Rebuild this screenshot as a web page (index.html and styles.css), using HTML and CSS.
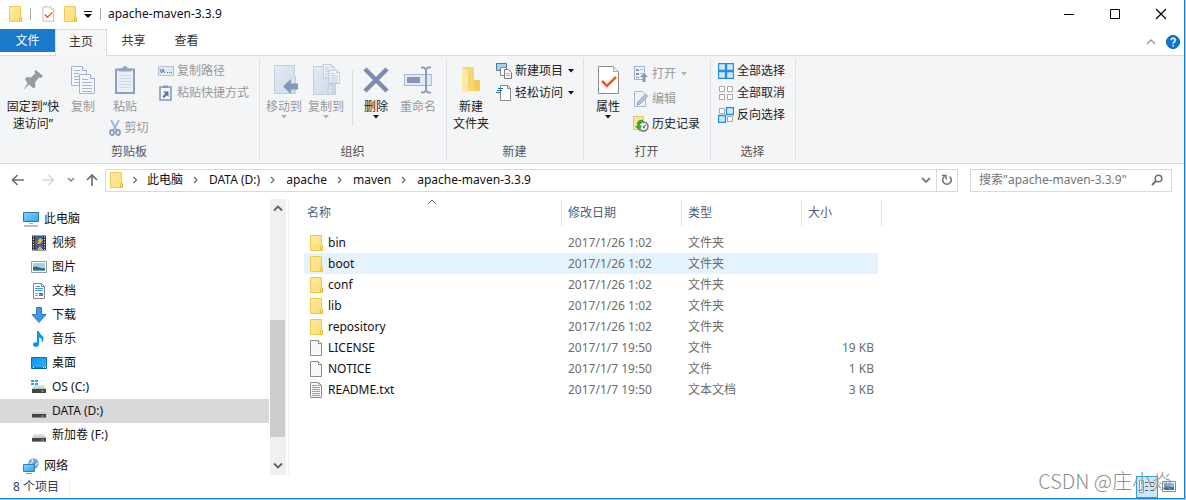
FILE: index.html
```html
<!DOCTYPE html>
<html lang="zh-CN">
<head>
<meta charset="utf-8">
<title>apache-maven-3.3.9</title>
<link rel="stylesheet" href="styles.css">
</head>
<body>
<svg class="defs" aria-hidden="true">
  <defs>
    <linearGradient id="gfold" x1="0" y1="0" x2="1" y2="1"><stop offset="0" stop-color="#ffeaa3"/><stop offset="1" stop-color="#fddc73"/></linearGradient>
    <linearGradient id="gscreen" x1="0" y1="0" x2="1" y2="1"><stop offset="0" stop-color="#8bd3ff"/><stop offset="1" stop-color="#2ea3f5"/></linearGradient>
    <linearGradient id="gblue" x1="0" y1="0" x2="1" y2="1"><stop offset="0" stop-color="#0a94f5"/><stop offset="1" stop-color="#39b0ff"/></linearGradient>
    <linearGradient id="gdrive" x1="0" y1="0" x2="0" y2="1"><stop offset="0" stop-color="#e8e8e8"/><stop offset="1" stop-color="#c2c2c2"/></linearGradient>
    <linearGradient id="gpale" x1="0" y1="0" x2="1" y2="1"><stop offset="0" stop-color="#e3ebf5"/><stop offset="1" stop-color="#cbd9ea"/></linearGradient>
    <symbol id="folder" viewBox="0 0 16 16"><path d="M2.500.5h11v10.500h1v4.500h-12z" fill="url(#gfold)" stroke="#eec94f"/><path d="M12.500 15V11.500l1-1 1 1V15z" fill="#fbe08a" stroke="#e6bd3c"/></symbol>
    <symbol id="file" viewBox="0 0 16 16"><path d="M2.500.5h8l3 3v12h-11z" fill="#f8f8f8" stroke="#8b8b8b"/><path d="M10.500.5v3h3" fill="#fff" stroke="#8b8b8b"/></symbol>
    <symbol id="text" viewBox="0 0 16 16"><path d="M2.500.5h8l3 3v12h-11z" fill="#f8f8f8" stroke="#8b8b8b"/><path d="M10.500.5v3h3M4 3.500h5M4 5.500h8M4 7.500h8M4 9.500h8M4 11.500h8M4 13.500h8" fill="none" stroke="#9a9a9a"/></symbol>
    <symbol id="check" viewBox="0 0 24 30"><path d="M2.500 1.500h15l5 5v22h-20z" fill="#fff" stroke="#8e8e8e"/><path d="M17.500 1.500v5h5" fill="#eee" stroke="#aaa"/><path d="M6 16l5 5 9-9" fill="none" stroke="#f2591c" stroke-width="2.500"/></symbol>
    <symbol id="drive" viewBox="0 0 16 16"><path d="M3 7h10l2 4H1z" fill="url(#gdrive)"/><path d="M1 11h14v4H1z" fill="#444"/><path d="M1 14.500h14" stroke="#8b8b8b"/><path d="M10.500 13h2" stroke="#3ee62c" stroke-width="1.500"/></symbol>
    <symbol id="cr" viewBox="0 0 8 8"><path d="M2 1l3 3-3 3" fill="none" stroke="#6d6d6d" stroke-width="1.300"/></symbol>
    <symbol id="dn" viewBox="0 0 6 4"><path d="M0 0h6L3 3.500z" fill="currentColor"/></symbol>
    <symbol id="pages" viewBox="0 0 24 28"><g fill="#f3f7fb" stroke="#a3b5d0"><path d="M.5.5h11l4 4v15H.5z"/><path d="M11.500.5v4h4M3 4.500h6M3 7.500h5M3 10.500h5M3 13.500h5M3 16.500h5"/><path d="M8.500 8.500h11l4 4v15h-15z"/><path d="M19.500 8.500v4h4M11 13.500h6M11 16.500h10M11 19.500h10M11 22.500h10M11 25.500h10"/></g></symbol>
  </defs>
</svg>

<div class="window">
  <header class="titlebar">
    <svg class="i16"><use href="#folder"/></svg>
    <span class="rule"></span>
    <button class="bare" aria-label="属性"><svg class="i16"><use href="#check"/></svg></button>
    <button class="bare" aria-label="新建文件夹"><svg class="i16"><use href="#folder"/></svg></button>
    <button class="bare custom" aria-label="自定义"><svg width="8" height="8" viewBox="0 0 8 8"><path d="M0 1.500h8" stroke="#111"/><path d="M0 4h8L4 8z" fill="#111"/></svg></button>
    <span class="rule"></span>
    <h1>apache-maven-3.3.9</h1>
    <div class="caption">
      <button class="bare" aria-label="最小化"><svg width="12" height="12" viewBox="0 0 12 12"><path d="M1 6.500h10" stroke="#000"/></svg></button>
      <button class="bare" aria-label="最大化"><svg width="12" height="12" viewBox="0 0 12 12"><path d="M1.500 1.500h9v9h-9z" fill="none" stroke="#000"/></svg></button>
      <button class="bare" aria-label="关闭"><svg width="12" height="12" viewBox="0 0 12 12"><path d="M1 1l10 10M11 1L1 11" stroke="#000" stroke-width="1.200"/></svg></button>
    </div>
  </header>

  <nav class="tabs">
    <button class="tab file">文件</button>
    <button class="tab active">主页</button>
    <button class="tab">共享</button>
    <button class="tab">查看</button>
    <div class="help">
      <button class="bare" aria-label="折叠功能区"><svg width="10" height="6" viewBox="0 0 10 6"><path d="M1 5l4-4 4 4" fill="none" stroke="#999" stroke-width="1.300"/></svg></button>
      <button class="bare" aria-label="帮助"><svg width="14" height="14" viewBox="0 0 14 14"><circle cx="7" cy="7" r="6.500" fill="#0c78d4" stroke="#0a5eaa"/><path d="M5 5.300c0-2.700 4.200-2.600 4.200 0C9.200 7 7.100 6.900 7.100 8.800M7.100 10v1.600" fill="none" stroke="#fff" stroke-width="1.500"/></svg></button>
    </div>
  </nav>

  <section class="ribbon">
    <div class="group clip">
      <div class="tools">
        <button class="big pin"><span class="pic"><svg width="22" height="22" viewBox="0 0 22 22"><path d="M14 1l7 6-2 2-2-.5-4 5 .5 4-2 2-4.500-4-6 6 4.500-7L3 10l2-2 4 .5 4-4-.5-2z" fill="#959ca3"/></svg></span>固定到“快<br>速访问”</button>
        <button class="big copy" disabled><span class="pic"><svg width="24" height="28"><use href="#pages"/></svg></span>复制</button>
        <div class="paste">
          <button class="big" disabled><span class="pic"><svg width="20" height="30" viewBox="0 0 20 30"><path d="M1 4.500h18v23.500H1z" fill="#eaf0f8" stroke="#8c9fbe" stroke-width="2"/><path d="M4 6.500V3.500h3.500C7.500 0 12.500 0 12.500 3.500H16v3z" fill="#95a5bf"/><path d="M4 10.500h12M4 13.500h12M4 16.500h12M4 19.500h12M4 22.500h12" stroke="#ccd8e8"/></svg></span>粘贴</button>
          <button class="small" disabled><svg width="12" height="16" viewBox="0 0 12 16"><path d="M2 0l6 11M10 0L4 11" stroke="#a5b6d0" stroke-width="1.800"/><g fill="none" stroke="#8a9dbe" stroke-width="1.800"><ellipse cx="3" cy="12.500" rx="2" ry="2.500"/><ellipse cx="9" cy="12.500" rx="2" ry="2.500"/></g></svg>剪切</button>
        </div>
        <div class="stack">
          <button class="small" disabled><svg width="16" height="10" viewBox="0 0 16 10"><path d="M.5.5h15v9H.5z" fill="#dfe8f3" stroke="#b3c2d7"/><path d="M2 3l1.500 4L5 3l1.500 4M9 6.500h1M11 6.500h1M13 6.500h1" fill="none" stroke="#5f7396"/></svg>复制路径</button>
          <button class="small" disabled><svg width="16" height="16" viewBox="0 0 16 16"><path d="M2 2h11v13H2z" fill="#f2f6fb" stroke="#8799b7" stroke-width="1.600"/><path d="M5 .5h5V3H5z" fill="#8799b7"/><path d="M5 6.500h5.500V12L8.800 10.300 6 13 4.500 11.500l2.800-2.900z" fill="#5b7198"/></svg>粘贴快捷方式</button>
        </div>
      </div>
      <h2>剪贴板</h2>
    </div>

    <div class="group org">
      <div class="tools">
        <button class="big" disabled><span class="pic"><svg width="28" height="30" viewBox="0 0 28 30"><path d="M4.500.5h20v11h1v17h-21z" fill="url(#gpale)" stroke="#c0cede"/><path d="M13 21.500L21 14v4.500h7v6h-7V29z" fill="#8497b6"/></svg></span>移动到<svg class="arrow"><use href="#dn"/></svg></button>
        <button class="big" disabled><span class="pic"><svg width="28" height="32" viewBox="0 0 28 32"><path d="M1.500 2.500h19v14h3v14h-22z" fill="url(#gpale)" stroke="#c0cede"/><path d="M16 30V22l2.500-2 2.500 2v8" fill="#d5e0ee" stroke="#b8c8dc"/><svg x="11" y="0" width="17" height="20" viewBox="0 0 24 28"><use href="#pages"/></svg></svg></span>复制到<svg class="arrow"><use href="#dn"/></svg></button>
        <span class="sep"></span>
        <button class="big del"><span class="pic"><svg width="26" height="26" viewBox="0 0 26 26"><path d="M2 2l22 22M24 2L2 24" stroke="#7a8cae" stroke-width="4.500"/></svg></span>删除<svg class="arrow"><use href="#dn"/></svg></button>
        <button class="big" disabled><span class="pic"><svg width="28" height="28" viewBox="0 0 28 28"><path d="M.5 8.500h27v11H.5z" fill="#e1e9f3" stroke="#a9b9d1"/><path d="M3 11h13v6H3z" fill="#8497b6"/><path d="M17 1.500h3l2 2 2-2h3M22 3v22M17 26.500h3l2-2 2 2h3" fill="none" stroke="#8c9ebc" stroke-width="2"/></svg></span>重命名</button>
      </div>
      <h2>组织</h2>
    </div>

    <div class="group new">
      <div class="tools">
        <button class="big"><span class="pic"><svg width="20" height="28" viewBox="0 0 20 28"><path d="M1 1h12v13h6v11H1z" fill="#f7d66d"/><path d="M1 1l6 4v22l-6-3z" fill="#ffe9a6"/><path d="M13 14h6v11h-6z" fill="#f3cc5c"/></svg></span>新建<br>文件夹</button>
        <div class="stack">
          <button class="small"><svg width="16" height="16" viewBox="0 0 16 16"><path d="M.5.500h10v7H.5z" fill="#9fd3ef" stroke="#477e9d"/><path d="M4.500 4.500h6v8h-6z" fill="#fff" stroke="#888"/><path d="M8.500 6.500h4l3 3v6h-7z" fill="#f7f9fc" stroke="#777"/><path d="M10 10.500h4M10 12.500h4" stroke="#92aee0"/></svg>新建项目<svg class="arrow"><use href="#dn"/></svg></button>
          <button class="small"><svg width="16" height="16" viewBox="0 0 16 16"><path d="M4.500.5h7l3 3v12h-10z" fill="#fff" stroke="#8a8a8a"/><path d="M11.500.5v3h3" fill="none" stroke="#8a8a8a"/><path d="M2 3.500h5M1 5.500h5M0 7.500h4" stroke="#1f78c0" stroke-width="1.200"/></svg>轻松访问<svg class="arrow"><use href="#dn"/></svg></button>
        </div>
      </div>
      <h2>新建</h2>
    </div>

    <div class="group open">
      <div class="tools">
        <button class="big props"><span class="pic"><svg width="24" height="30"><use href="#check"/></svg></span>属性<svg class="arrow"><use href="#dn"/></svg></button>
        <div class="stack">
          <button class="small" disabled><svg width="16" height="16" viewBox="0 0 16 16"><path d="M1.500.5h10v13h-10z" fill="#edf2f8" stroke="#9eb0cb"/><path d="M3 3h3v2H3zM3 7h3v2H3zM3 11h3v1H3z" fill="#8497b6"/><path d="M7 3.500h3M7 7.500h3" stroke="#a9b9d1"/><path d="M11 7l4 4h-2.500v5h-3v-5H7z" fill="#8497b6"/></svg>打开<svg class="arrow"><use href="#dn"/></svg></button>
          <button class="small" disabled><svg width="16" height="16" viewBox="0 0 16 16"><path d="M1.500.5h8l3 3v12h-11z" fill="#edf2f8" stroke="#a9b9d1"/><path d="M4 14l1-3 7.500-8 2 2L7 13z" fill="#b7c6dc" stroke="#8da0bf"/></svg>编辑</button>
          <button class="small"><svg width="16" height="16" viewBox="0 0 16 16"><path d="M.5.5h10v13H.5z" fill="#fde492" stroke="#eacb61"/><circle cx="10.500" cy="10.500" r="4.500" fill="#eee" stroke="#737373" stroke-width="1.400"/><path d="M10 11l3-2M10 11l2 1" stroke="#555"/><path d="M10 4C5 3 3 7 4.500 9.500L2 10l4.500 5L9 9.500l-2.500.2C6 7.500 8 6.500 10 6.500z" fill="#3aa838"/></svg>历史记录</button>
        </div>
      </div>
      <h2>打开</h2>
    </div>

    <div class="group select">
      <div class="tools">
        <div class="stack">
          <button class="small"><svg width="16" height="16" viewBox="0 0 16 16"><path d="M.5.500h7v7h-7zM8.500.5h7v7h-7zM.5 8.500h7v7h-7zM8.500 8.500h7v7h-7z" fill="#cfe9fc" stroke="#258ddd" stroke-width="1.300"/></svg>全部选择</button>
          <button class="small"><svg width="16" height="16" viewBox="0 0 16 16"><path d="M1.500 1.500h5v5h-5zM9.500 1.500h5v5h-5zM1.500 9.500h5v5h-5zM9.500 9.500h5v5h-5z" fill="#fff" stroke="#a7a7a7"/></svg>全部取消</button>
          <button class="small"><svg width="16" height="16" viewBox="0 0 16 16"><path d="M1.500 1.500h5v5h-5zM9.500 9.500h5v5h-5z" fill="#fff" stroke="#a7a7a7"/><path d="M8.500.5h7v7h-7zM.5 8.500h7v7h-7z" fill="#cfe9fc" stroke="#258ddd" stroke-width="1.300"/></svg>反向选择</button>
        </div>
      </div>
      <h2>选择</h2>
    </div>
  </section>

  <div class="location">
    <button class="bare step" aria-label="后退"><svg width="14" height="12" viewBox="0 0 14 12"><path d="M13 6H2M6.500 1L1.500 6l5 5" fill="none" stroke="#6f6f6f" stroke-width="1.700"/></svg></button>
    <button class="bare step" aria-label="前进"><svg width="14" height="12" viewBox="0 0 14 12"><path d="M1 6h11M7.500 1l5 5-5 5" fill="none" stroke="#d9d9d9" stroke-width="1.700"/></svg></button>
    <button class="bare recent" aria-label="最近位置"><svg width="8" height="6" viewBox="0 0 8 6"><path d="M1 1l3 3 3-3" fill="none" stroke="#858585" stroke-width="1.500"/></svg></button>
    <button class="bare up" aria-label="向上"><svg width="12" height="14" viewBox="0 0 12 14"><path d="M6 13V2M1 7l5-5 5 5" fill="none" stroke="#6f6f6f" stroke-width="1.700"/></svg></button>
    <div class="address">
      <svg class="i16"><use href="#folder"/></svg>
      <svg class="chev first"><use href="#cr"/></svg><a href="#">此电脑</a>
      <svg class="chev"><use href="#cr"/></svg><a href="#">DATA (D:)</a>
      <svg class="chev"><use href="#cr"/></svg><a href="#">apache</a>
      <svg class="chev"><use href="#cr"/></svg><a href="#">maven</a>
      <svg class="chev"><use href="#cr"/></svg><a href="#">apache-maven-3.3.9</a>
      <button class="bare history" aria-label="以前的位置"><svg width="10" height="7" viewBox="0 0 10 7"><path d="M1 1l4 4 4-4" fill="none" stroke="#7d7d7d" stroke-width="1.800"/></svg></button>
      <button class="bare refresh" aria-label="刷新"><svg width="12" height="12" viewBox="0 0 12 12"><path d="M8.500 2.500A4.300 4.300 0 1 1 3.500 2.500M1 1.500h4v4" fill="none" stroke="#707070" stroke-width="1.500"/></svg></button>
    </div>
    <div class="search">
      <input type="text" aria-label="搜索" placeholder='搜索"apache-maven-3.3.9"'>
      <svg width="12" height="12" viewBox="0 0 12 12"><circle cx="7.500" cy="4.500" r="3.300" fill="none" stroke="#707070" stroke-width="1.600"/><path d="M5 7L1 11" stroke="#707070" stroke-width="2"/></svg>
    </div>
  </div>

  <main class="content">
    <nav class="tree">
      <a class="node root" href="#"><svg class="i16" viewBox="0 0 16 16"><path d="M.5 1.500h15v9H.5z" fill="url(#gscreen)" stroke="#34749f"/><path d="M6 12.500h4" stroke="#9eb3c2"/><path d="M1 15h14" stroke="#8b9eac" stroke-width="1.300"/></svg>此电脑</a>
      <a class="node" href="#"><svg class="i16" viewBox="0 0 16 16"><path d="M1 .5h14v15H1z" fill="#343434"/><path d="M4 1h8v14H4z" fill="#375fae"/><path d="M5 8l4-5 3 2-3 4z" fill="#e4b83c"/><path d="M4 6h4l-2 4z" fill="#d24b32"/><path d="M6 15l3-4 3 4z" fill="#e9b52f"/><path d="M2.500 1.500v14M13.500 1.500v14" stroke="#fff" stroke-dasharray="1 1.500"/></svg>视频</a>
      <a class="node" href="#"><svg class="i16" viewBox="0 0 16 16"><path d="M.5 2.500h15v11H.5z" fill="#fff" stroke="#999"/><path d="M2 4h12v8H2z" fill="#a4d1f3"/><path d="M2 8c4-2 6 2 12 1v3H2z" fill="#356d63"/><path d="M2 11h12v1H2z" fill="#6ba4c7"/></svg>图片</a>
      <a class="node" href="#"><svg class="i16" viewBox="0 0 16 16"><path d="M2.500.5h8l3 3v12h-11z" fill="#fff" stroke="#858585"/><path d="M10.500.5v3h3" fill="none" stroke="#858585"/><path d="M4 5.500h8M4 7.500h8M5 3.500h4" stroke="#3b99cc"/><path d="M4 10.500h3M4 12.500h3" stroke="#999"/><path d="M8 10h4v3H8z" fill="#438daa"/></svg>文档</a>
      <a class="node" href="#"><svg class="i16" viewBox="0 0 16 16"><path d="M5.500.5h5v7h4.500L8 15.500 1 7.500h4.500z" fill="#3b9bea" stroke="#287fc5"/></svg>下载</a>
      <a class="node" href="#"><svg class="i16" viewBox="0 0 16 16"><path d="M6 0h2c.5 4 4.500 4 4.500 7.500 0 2-1 3.500-2 4.500 1-4-.5-5-2.500-5.500V13c0 2-1.500 3-3.300 3S2 15 2 13.500 4 11 6 11.500z" fill="#0b94f4"/></svg>音乐</a>
      <a class="node" href="#"><svg class="i16" viewBox="0 0 16 16"><path d="M.5 2.500h15v11H.5z" fill="url(#gblue)" stroke="#176ba7"/><path d="M1 13h14" stroke="#075690"/><path d="M2 12.500h1M12 12.500h1M14 12.500h1" stroke="#fff"/></svg>桌面</a>
      <a class="node" href="#"><svg class="i16" viewBox="0 0 16 16"><path d="M4 6h9l2 4H1z" fill="url(#gdrive)"/><path d="M1 10h14v4H1z" fill="#444"/><path d="M10.500 12h2" stroke="#3ee62c" stroke-width="1.500"/><path d="M0 1h3v2H0zM4 1h3v2H4zM0 4h3v2H0zM4 4h3v2H4z" fill="#00b5ed"/></svg>OS (C:)</a>
      <a class="node current" href="#"><svg class="i16"><use href="#drive"/></svg>DATA (D:)</a>
      <a class="node" href="#"><svg class="i16"><use href="#drive"/></svg>新加卷 (F:)</a>
      <a class="node root network" href="#"><svg class="i16" viewBox="0 0 16 16"><circle cx="10.500" cy="5.500" r="5.200" fill="#6fa6c9"/><path d="M8 1c3 0 2 3 0 4s1 3 3 3 3-3 4-3" fill="none" stroke="#c8e3ee" stroke-width="1.500"/><path d="M.5 6.500h11v7H.5z" fill="url(#gscreen)" stroke="#3180b9"/><path d="M3 15.500h6" stroke="#8b9eac"/></svg>网络</a>
    </nav>
    <div class="scrollbar">
      <svg width="10" height="7" viewBox="0 0 10 7"><path d="M1 5.500l4-4 4 4" fill="none" stroke="#606060" stroke-width="1.800"/></svg>
      <div class="track"><span class="thumb"></span></div>
      <svg width="10" height="7" viewBox="0 0 10 7"><path d="M1 1.500l4 4 4-4" fill="none" stroke="#606060" stroke-width="1.800"/></svg>
    </div>
    <div class="listing">
      <table>
        <colgroup><col class="c-name"><col class="c-date"><col class="c-type"><col class="c-size"></colgroup>
        <thead><tr><th>名称<svg class="sort" width="8" height="5" viewBox="0 0 8 5"><path d="M.5 4.500L4 1l3.500 3.500" fill="none" stroke="#666"/></svg></th><th>修改日期</th><th>类型</th><th>大小</th></tr></thead>
        <tbody>
          <tr><td><span class="entry"><svg class="i16"><use href="#folder"/></svg>bin</span></td><td>2017/1/26 1:02</td><td>文件夹</td><td></td></tr>
          <tr class="hover"><td><span class="entry"><svg class="i16"><use href="#folder"/></svg>boot</span></td><td>2017/1/26 1:02</td><td>文件夹</td><td></td></tr>
          <tr><td><span class="entry"><svg class="i16"><use href="#folder"/></svg>conf</span></td><td>2017/1/26 1:02</td><td>文件夹</td><td></td></tr>
          <tr><td><span class="entry"><svg class="i16"><use href="#folder"/></svg>lib</span></td><td>2017/1/26 1:02</td><td>文件夹</td><td></td></tr>
          <tr><td><span class="entry"><svg class="i16"><use href="#folder"/></svg>repository</span></td><td>2017/1/26 1:02</td><td>文件夹</td><td></td></tr>
          <tr><td><span class="entry"><svg class="i16"><use href="#file"/></svg>LICENSE</span></td><td>2017/1/7 19:50</td><td>文件</td><td>19 KB</td></tr>
          <tr><td><span class="entry"><svg class="i16"><use href="#file"/></svg>NOTICE</span></td><td>2017/1/7 19:50</td><td>文件</td><td>1 KB</td></tr>
          <tr><td><span class="entry"><svg class="i16"><use href="#text"/></svg>README.txt</span></td><td>2017/1/7 19:50</td><td>文本文档</td><td>3 KB</td></tr>
        </tbody>
      </table>
    </div>
  </main>

  <footer class="status">
    <span class="count">8 个项目</span>
    <div class="views">
      <button class="bare view on" aria-label="详细信息"><svg width="16" height="14" viewBox="0 0 16 14"><path d="M.5.5h4v12h-4z" fill="#fff" stroke="#999"/><path d="M2 3h1M2 10h1" stroke="#d33" stroke-width="1.500"/><path d="M6 2.500h3M11 2.500h4M6 6.500h3M11 6.500h4M6 10.500h3M11 10.500h4" stroke="#666"/></svg></button>
      <button class="bare view" aria-label="大图标"><svg width="14" height="11" viewBox="0 0 14 11"><path d="M.5.5h13v10H.5z" fill="#fff" stroke="#8a8a8a"/><path d="M2 2h10v7H2z" fill="#80b7ed"/><path d="M2 6c4-2 6 1 10 0v3H2z" fill="#3c7780"/></svg></button>
    </div>
    <span class="watermark">CSDN @庄小焱</span>
  </footer>
</div>
</body>
</html>
```
FILE: styles.css
```css
* { box-sizing: border-box; }
body {
  margin: 0;
  height: 100vh;
  padding: 0 1px 1px 0;
  background: #a9c6df;
  color: #111;
  font: 12px/16px "Noto Sans", "Noto Sans CJK SC", sans-serif;
}
h1, h2 { margin: 0; font: inherit; }
a { color: inherit; text-decoration: none; }
svg { flex: none; }
button { font: inherit; color: inherit; }
.defs { position: absolute; width: 0; height: 0; }
.i16 { width: 16px; height: 16px; }
.bare {
  display: flex;
  align-items: center;
  justify-content: center;
  padding: 0;
  border: 0;
  background: none;
}
.window {
  display: flex;
  flex-direction: column;
  height: 100%;
  background: #fff;
  border-right: 1px solid #1883d7;
  border-bottom: 1px solid #1883d7;
}

/* Title bar */
.titlebar {
  display: flex;
  flex: none;
  align-items: center;
  height: 28px;
  padding-left: 7px;
}
.rule { width: 1px; height: 12px; margin: 0 9px 0 7px; background: #aaa; }
.titlebar .bare + .bare { margin-left: 6px; }
.titlebar .custom + .rule { margin: 0 7px 0 8px; }
.caption { display: flex; margin-left: auto; }
.caption .bare { width: 46px; height: 28px; }
.titlebar .caption .bare { margin: 0; }

/* Tabs */
.tabs {
  display: flex;
  flex: none;
  height: 28px;
  padding-top: 1px;
  border-bottom: 1px solid #d9dbdd;
}
.tab {
  width: 53px;
  height: 24px;
  padding: 0;
  border: 0;
  background: none;
  color: #333;
}
.tab.file { width: 55px; height: 23px; background: #1979ca; color: #fff; }
.tab.active {
  width: 52px;
  height: 27px;
  padding-bottom: 2px;
  border: 1px solid #d9dbdd;
  border-bottom: 0;
  background: #f4f6f8;
}
.help { display: flex; align-items: center; gap: 10px; margin-left: auto; padding-right: 4px; }

/* Ribbon */
.ribbon {
  display: flex;
  flex: none;
  height: 108px;
  background: #f4f5f7;
  border-bottom: 1px solid #d9dbdd;
}
.group {
  display: flex;
  flex-direction: column;
  padding: 0 2px 3px 0;
  background: linear-gradient(#dfe1e4, #dfe1e4) right 2px / 1px 102px no-repeat;
}
.group h2 { text-align: center; color: #555; }
.tools { display: flex; flex: 1; align-items: flex-start; padding-top: 4px; }
.clip { width: 260px; }
.org { width: 187px; }
.new { width: 137px; }
.open { width: 127px; }
.select { width: 85px; }
.big {
  display: flex;
  flex: none;
  flex-direction: column;
  align-items: center;
  padding: 2px 0 0;
  border: 0;
  background: none;
  line-height: 17px;
  color: #222;
}
.big .pic { display: flex; align-items: center; justify-content: center; height: 36px; }
.small {
  display: flex;
  align-items: center;
  gap: 3px;
  height: 22px;
  padding: 0;
  border: 0;
  background: none;
  color: #222;
}
.big:disabled, .small:disabled { color: #999; }
.arrow { width: 6px; height: 4px; color: #111; }
.small .arrow { margin-left: 2px; }
:disabled .arrow { color: #b0b0b0; }
.stack { display: flex; flex-direction: column; }
.pin { width: 66px; }
.copy { width: 34px; }
.paste { display: flex; flex-direction: column; align-items: center; width: 50px; }
.paste .small { margin: 2px 0 0 8px; }
.clip .stack { margin-left: 8px; }
.org .tools { padding-left: 3px; }
.org .big { width: 42px; }
.org .big.del { width: 46px; }
.sep { width: 1px; height: 56px; margin: 10px 0 0 5px; background: #dcdee1; }
.org .big:last-child { margin-left: -2px; }
.new .big { width: 48px; }
.new .stack { margin-left: 1px; }
.open .big { width: 48px; }
.open .stack { gap: 3px; padding-top: 3px; margin-left: 1px; }
.select .tools { padding-left: 7px; }

/* Location row */
.location {
  display: flex;
  flex: none;
  align-items: center;
  height: 32px;
  padding: 0 12px 0 11px;
}
.step { width: 14px; margin-right: 16px; }
.recent { width: 8px; margin-left: -4px; }
.up { width: 12px; margin: 0 7px 0 11px; }
.address {
  display: flex;
  flex: 1;
  align-items: center;
  height: 23px;
  padding-left: 2px;
  border: 1px solid #d9d9d9;
}
.chev { width: 26px; height: 8px; }
.chev.first { width: 23px; }
.history { width: 20px; height: 21px; margin-left: auto; }
.refresh { width: 21px; height: 21px; border-left: 1px solid #d9d9d9; }
.search {
  display: flex;
  align-items: center;
  width: 202px;
  height: 23px;
  margin-left: 12px;
  padding: 0 8px;
  border: 1px solid #d9d9d9;
}
.search input {
  flex: 1;
  min-width: 0;
  padding: 0;
  border: 0;
  outline: 0;
  font: inherit;
}
.search input::placeholder { color: #757575; opacity: 1; }

/* Navigation tree */
.content { display: flex; flex: 1; min-height: 0; padding-top: 3px; }
.tree { width: 269px; padding-top: 8px; overflow: hidden; }
.node {
  display: flex;
  align-items: center;
  gap: 5px;
  height: 24px;
  padding-left: 31px;
}
.node.root { padding-left: 23px; }
.node.current { background: #d9d9d9; }
.node.network { margin-top: 7px; }
.scrollbar {
  display: flex;
  flex-direction: column;
  align-items: center;
  width: 16px;
  margin-left: 1px;
  padding: 6px 0;
  background: #f0f0f0;
}
.track {
  display: flex;
  flex-direction: column;
  justify-content: flex-end;
  flex: 1;
  width: 100%;
  padding: 0 1px 25px 0;
}
.thumb { height: 52%; background: #cdcdcd; }

/* File list */
.listing { flex: 1; min-width: 0; margin-left: 2px; padding-left: 15px; border-left: 1px solid #f2f2f2; }
table { width: 578px; border-collapse: separate; border-spacing: 0; table-layout: fixed; }
.c-name { width: 258px; }
.c-date, .c-type { width: 120px; }
.c-size { width: 80px; }
th {
  position: relative;
  height: 27px;
  padding: 0 3px;
  border-right: 1px solid #e3e3e3;
  color: #4c607a;
  font-weight: 400;
  text-align: left;
}
th + th { padding-left: 6px; }
.sort { position: absolute; top: 0; left: 50%; margin-left: -5px; }
tbody::before { content: ""; display: block; height: 6px; }
td { height: 21px; padding: 0 6px; color: #6d6d6d; }
td:first-child { padding-left: 4px; color: #111; }
td:last-child { padding: 0 4px; text-align: right; border-right: 4px solid transparent; background-clip: padding-box; }
.hover td { background-color: #e5f3ff; }
.entry { display: flex; align-items: center; gap: 4px; }

/* Status bar */
.status {
  position: relative;
  display: flex;
  flex: none;
  align-items: center;
  justify-content: space-between;
  height: 23px;
  padding: 0 4px 0 13px;
  color: #2c3e5c;
}
.count { padding-right: 10px; border-right: 1px solid #eee; }
.views { display: flex; }
.view { width: 22px; height: 22px; }
.view.on { background: #cce8f7; border: 1px solid #28a0da; }
.watermark {
  position: absolute;
  right: 12px;
  bottom: 4px;
  color: #8f8f8f;
  font: 300 20px/26px "Noto Sans CJK SC", sans-serif;
  white-space: nowrap;
}
```
